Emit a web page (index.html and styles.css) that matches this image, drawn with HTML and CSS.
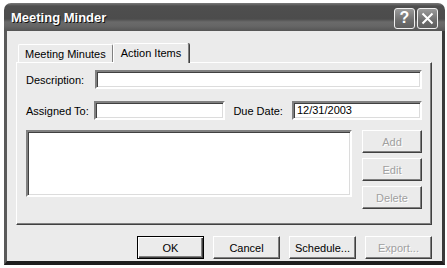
FILE: index.html
```html
<!DOCTYPE html>
<html lang="en">
<head>
    <meta charset="UTF-8">
    <title>Meeting Minder</title>
    <link rel="stylesheet" href="styles.css">
</head>
<body>
    <div class="window">
        <div class="titlebar">
            <span class="title">Meeting Minder</span>
            <div class="caption-btns">
                <div class="cap-btn help">?</div>
                <div class="cap-btn close">
                    <svg width="13" height="13" viewBox="0 0 13 13">
                        <path d="M1.5 1.5 L11.5 11.5 M11.5 1.5 L1.5 11.5" stroke="#fff" stroke-width="2" fill="none"/>
                    </svg>
                </div>
            </div>
        </div>

        <div class="client">
            <div class="tabs">
                <div class="tab">Meeting Minutes</div>
                <div class="tab active">Action Items</div>
            </div>

            <div class="panel">
                <div class="row">
                    <label class="lbl">Description:</label>
                    <div class="field wide"></div>
                </div>
                <div class="row second">
                    <label class="lbl">Assigned To:</label>
                    <div class="field assigned"></div>
                    <label class="lbl due">Due Date:</label>
                    <div class="field date">12/31/2003</div>
                </div>
                <div class="items">
                    <div class="list"></div>
                    <div class="side-btns">
                        <div class="btn disabled">Add</div>
                        <div class="btn disabled">Edit</div>
                        <div class="btn disabled">Delete</div>
                    </div>
                </div>
            </div>

            <div class="footer">
                <div class="btn default">OK</div>
                <div class="btn">Cancel</div>
                <div class="btn">Schedule...</div>
                <div class="btn disabled">Export...</div>
            </div>
        </div>
    </div>
</body>
</html>
```

FILE: styles.css
```css
body {
    margin: 0;
    background-color: #ffffff;
    font-family: 'Liberation Sans', Arial, sans-serif;
    font-size: 11px;
    color: #000;
}

.window {
    margin: 3px 0 0 4px;
    width: 441px;
    height: 262px;
    display: flex;
    flex-direction: column;
}

.titlebar {
    height: 28px;
    border-radius: 7px 7px 0 0;
    background: linear-gradient(to bottom, #7a7a7a 0px, #4e4e4e 3px, #4c4c4c 16px, #6a6a6a 19px, #666 23px, #555 28px);
    display: flex;
    align-items: center;
    justify-content: space-between;
    padding: 0 7px 0 7px;
}

.title {
    color: #fff;
    font-weight: bold;
    font-size: 13px;
    text-shadow: 1px 1px 0 #111;
    margin-top: 1px;
}

.caption-btns {
    display: flex;
    gap: 2px;
    margin-top: 2px;
}

.cap-btn {
    width: 19px;
    height: 19px;
    border: 1px solid #f0f0f0;
    border-radius: 3px;
    background: linear-gradient(to bottom, #9a9a9a, #6e6e6e 60%, #5e5e5e);
    color: #fff;
    display: flex;
    align-items: center;
    justify-content: center;
    font-weight: bold;
    font-size: 16px;
}

.client {
    flex: 1;
    background-color: #ebebeb;
    border-left: 3px solid #5a5a5a;
    border-right: 3px solid #3a3a3a;
    border-bottom: 4px solid #1e1e1e;
    padding: 11px 10px 0 9px;
}

.tabs {
    display: flex;
    align-items: flex-end;
    height: 20px;
    padding-left: 2px;
}

.tab {
    height: 15px;
    padding: 2px 6px 0 6px;
    border: 1px solid #fff;
    border-bottom: none;
    border-right-color: #808080;
    border-radius: 2px 2px 0 0;
    line-height: 14px;
}

.tab.active {
    height: 19px;
    padding: 0 7px;
    margin-bottom: -1px;
    background-color: #ebebeb;
    position: relative;
    z-index: 1;
    box-shadow: 1px 0 0 #404040;
    line-height: 19px;
}

.panel {
    height: 154px;
    border: 1px solid;
    border-color: #fff #404040 #404040 #fff;
    box-shadow: inset -1px -1px 0 #808080;
    padding: 7px 9px 0 9px;
}

.row {
    display: flex;
    align-items: center;
}

.row.second {
    margin-top: 12px;
}

.lbl {
    width: 70px;
}

.lbl.due {
    margin-left: 8px;
    width: 60px;
}

.field {
    height: 15px;
    background-color: #fff;
    border: 2px solid;
    border-color: #808080 #fff #fff #808080;
    box-shadow: inset 1px 1px 0 #404040, inset -1px -1px 0 #dcdcdc;
    padding: 0 3px;
    line-height: 15px;
    box-sizing: content-box;
}

.field.wide {
    width: 321px;
}

.field.assigned {
    width: 124px;
}

.field.date {
    width: 123px;
}

.items {
    display: flex;
    gap: 10px;
    margin-top: 10px;
}

.list {
    width: 324px;
    height: 63px;
    background-color: #fff;
    border: 2px solid;
    border-color: #808080 #fff #fff #808080;
    box-shadow: inset 1px 1px 0 #404040, inset -1px -1px 0 #dcdcdc;
}

.side-btns {
    display: flex;
    flex-direction: column;
    gap: 5px;
}

.btn {
    width: 58px;
    height: 21px;
    border: 1px solid;
    border-color: #fff #404040 #404040 #fff;
    box-shadow: inset -1px -1px 0 #808080;
    background-color: #ebebeb;
    display: flex;
    align-items: center;
    justify-content: center;
}

.btn.disabled {
    color: #a0a0a0;
    text-shadow: 1px 1px 0 #fff;
}

.footer {
    display: flex;
    justify-content: flex-end;
    gap: 9px;
    margin-top: 11px;
}

.footer .btn {
    width: 65px;
}

.btn.default {
    border: 1px solid #000;
    box-shadow: inset 1px 1px 0 #fff, inset -1px -1px 0 #404040, inset -2px -2px 0 #808080;
}
```
